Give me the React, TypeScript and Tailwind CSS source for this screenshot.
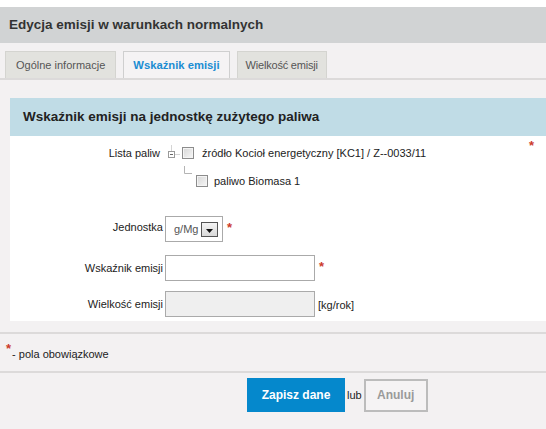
import React from 'react'

function Req({ className = '' }: { className?: string }) {
  return <span className={`text-[13px] leading-none font-bold text-[#cc3b2b] ${className}`}>*</span>
}

function Checkbox() {
  return (
    <span className="inline-block w-[12px] h-[12px] shrink-0 border border-[#8c8c8c] bg-gradient-to-br from-[#d6d6d6] to-[#f7f7f7] shadow-[inset_0_0_0_1px_#f4f4f4]" />
  )
}

function Expander() {
  return (
    <svg width="16" height="16" viewBox="0 0 16 16" className="shrink-0">
      <path d="M6.5 0.5 V6.5" stroke="#a8a8a8" strokeWidth="1" strokeDasharray="1 1" />
      <path d="M9.5 9.5 H15" stroke="#a8a8a8" strokeWidth="1" strokeDasharray="1 1" />
      <rect x="3.5" y="6.5" width="6" height="6" fill="#fff" stroke="#9a9a9a" />
      <path d="M5 9.5 H8" stroke="#666" strokeWidth="1" />
    </svg>
  )
}

export default function App() {
  return (
    <div className="w-[546px] h-[429px] overflow-hidden bg-[#f3f1f2] font-['Liberation_Sans',Arial,sans-serif] text-[11px] leading-[14px] text-[#222]">
      <div className="h-[7px] bg-white" />
      <div className="h-[36px] bg-[#d1d3d4] flex items-center px-[9px] text-[13.5px] font-bold text-[#333]">
        Edycja emisji w warunkach normalnych
      </div>

      {/* tabs */}
      <div className="mt-[8px] px-[5px] flex gap-[7px] border-b-2 border-[#dcdada]">
        <div className="h-[27px] px-[10px] flex items-center bg-[#e2e2de] border border-b-0 border-[#d4d4d0] text-[#555]">
          Ogólne informacje
        </div>
        <div className="h-[27px] px-[9px] flex items-center bg-[#f5f3f4] border border-b-0 border-[#cfcfcf] font-bold text-[11.25px] text-[#1b8dd2]">
          Wskaźnik emisji
        </div>
        <div className="h-[27px] px-[8px] flex items-center bg-[#e2e2de] border border-b-0 border-[#d4d4d0] text-[#555] tracking-[-0.2px]">
          Wielkość emisji
        </div>
      </div>

      {/* panel */}
      <div className="mt-[18px] ml-[10px] bg-white">
        <div className="h-[38px] bg-[#c0dce6] flex items-center pl-[13px] text-[13.5px] font-bold text-[#222]">
          Wskaźnik emisji na jednostkę zużytego paliwa
        </div>

        <div className="relative pt-[5px] pb-[4px]">
          <Req className="absolute right-[12px] top-[3px]" />

          {/* Lista paliw */}
          <div className="flex items-center h-[24px]">
            <span className="w-[150px] text-right">Lista paliw</span>
            <span className="ml-[5px]"><Expander /></span>
            <span className="ml-[1px] flex"><Checkbox /></span>
            <span className="ml-[8px]">źródło Kocioł energetyczny [KC1] / Z--0033/11</span>
          </div>
          <div className="flex items-start ml-[172px]">
            <svg width="14" height="12" viewBox="0 0 14 12" className="shrink-0">
              <path d="M2.5 1 V8.5 H10" fill="none" stroke="#b4b4b4" strokeWidth="1" />
            </svg>
            <div className="flex items-center h-[14px] mt-[9px]">
              <Checkbox />
              <span className="ml-[6px]">paliwo Biomasa 1</span>
            </div>
          </div>

          {/* Jednostka */}
          <div className="flex items-start mt-[28px]">
            <span className="w-[153px] text-right mt-[4px]">Jednostka</span>
            <div className="ml-[2px] w-[58px] h-[26px] border border-[#aaa] bg-white flex items-center pl-[8px] pr-[4px] justify-between">
              <span className="text-[#555]">g/Mg</span>
              <span className="w-[17px] h-[15px] border border-[#555] bg-gradient-to-b from-[#f4f4f4] to-[#d9d9d9] flex items-center justify-center">
                <svg width="7" height="4" viewBox="0 0 7 4" className="mt-[3px]">
                  <path d="M0 0 H7 L3.5 4 Z" fill="#111" />
                </svg>
              </span>
            </div>
            <Req className="ml-[4px] mt-[5px]" />
          </div>

          {/* Wskaźnik emisji */}
          <div className="flex items-center mt-[13px]">
            <span className="w-[153px] text-right">Wskaźnik emisji</span>
            <div className="ml-[2px] w-[150px] h-[26px] border border-[#aaa] bg-white" />
            <Req className="ml-[4px] self-start mt-[5px]" />
          </div>

          {/* Wielkość emisji */}
          <div className="flex items-center mt-[10px]">
            <span className="w-[153px] text-right">Wielkość emisji</span>
            <div className="ml-[2px] w-[150px] h-[26px] border border-[#aaa] bg-[#efefef]" />
            <span className="ml-[3px] mt-[2px]">[kg/rok]</span>
          </div>
        </div>
      </div>

      {/* required note */}
      <div className="mt-[11px] border-t-2 border-[#dcdada] h-[39px] flex items-start pl-[6px]">
        <Req className="mt-[8px]" />
        <span className="ml-[1px] mt-[13px]">- pola obowiązkowe</span>
      </div>

      {/* actions */}
      <div className="border-t-2 border-[#dcdada] pt-[5px] pl-[247px] flex items-center">
        <button className="w-[98px] h-[34px] bg-[#0588cc] text-white font-bold text-[12px]">Zapisz dane</button>
        <span className="mx-[2px]">lub</span>
        <button className="w-[64px] h-[33px] border-2 border-[#bcbcbc] bg-[#f5f3f4] text-[#9a9a9a] font-bold text-[12px]">Anuluj</button>
      </div>
    </div>
  )
}
